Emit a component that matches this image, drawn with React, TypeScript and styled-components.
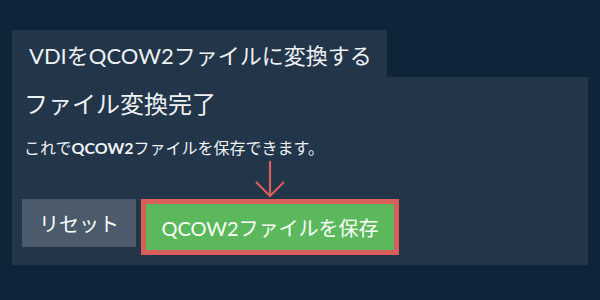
import styled, { createGlobalStyle } from 'styled-components';

const GlobalStyle = createGlobalStyle`
  html, body {
    margin: 0;
    padding: 0;
    background: #0f2339;
  }
  body {
    font-family: Lato, 'Noto Sans CJK JP', sans-serif;
    color: #eef2f6;
  }
`;

const Page = styled.div`
  width: 600px;
  height: 300px;
  padding: 30px 12px 0 12px;
  box-sizing: border-box;
`;

const Tab = styled.div`
  display: inline-flex;
  align-items: center;
  height: 47px;
  width: 375px;
  box-sizing: border-box;
  padding-left: 17px;
  background: #223549;
  font-size: 22px;
  color: #eef2f6;
`;

const Panel = styled.div`
  background: #223549;
  padding: 10px 10px 10px 10px;
  display: flex;
  flex-direction: column;
`;

const Heading = styled.h2`
  margin: 2px 0 0 2px;
  font-size: 24px;
  font-weight: 400;
  line-height: 30px;
`;

const Text = styled.p`
  margin: 18px 0 0 2px;
  font-size: 16px;
  line-height: 22px;

  b {
    font-weight: 700;
  }
`;

const Actions = styled.div`
  display: flex;
  align-items: flex-start;
  gap: 5px;
  margin-top: 40px;
`;

const Button = styled.button<{ $variant: 'reset' | 'save' }>`
  font-family: Lato, 'Noto Sans CJK JP', sans-serif;
  font-size: 20px;
  color: #ffffff;
  border: none;
  padding: 0;
  cursor: pointer;
  background: ${p => (p.$variant === 'save' ? '#5cb85c' : '#4b5b6c')};
  height: ${p => (p.$variant === 'save' ? '56px' : '48px')};
  width: ${p => (p.$variant === 'save' ? '258px' : '114px')};
  box-sizing: border-box;
  ${p => p.$variant === 'save' && 'border: 5px solid #d9605a;'}
`;

const SaveWrap = styled.div`
  position: relative;
`;

const Arrow = styled.svg`
  position: absolute;
  left: 50%;
  top: -39px;
  transform: translateX(-50%);
`;

export default function App() {
  return (
    <>
      <GlobalStyle />
      <Page>
        <Tab>VDIをQCOW2ファイルに変換する</Tab>
        <Panel>
          <Heading>ファイル変換完了</Heading>
          <Text>
            これで<b>QCOW2</b>ファイルを保存できます。
          </Text>
          <Actions>
            <Button $variant="reset">リセット</Button>
            <SaveWrap>
              <Arrow width="32" height="38" viewBox="0 0 32 38">
                <path
                  d="M16 1 V36 M2 22 L16 36 L30 22"
                  fill="none"
                  stroke="#d9605a"
                  strokeWidth="2.2"
                />
              </Arrow>
              <Button $variant="save">QCOW2ファイルを保存</Button>
            </SaveWrap>
          </Actions>
        </Panel>
      </Page>
    </>
  );
}
